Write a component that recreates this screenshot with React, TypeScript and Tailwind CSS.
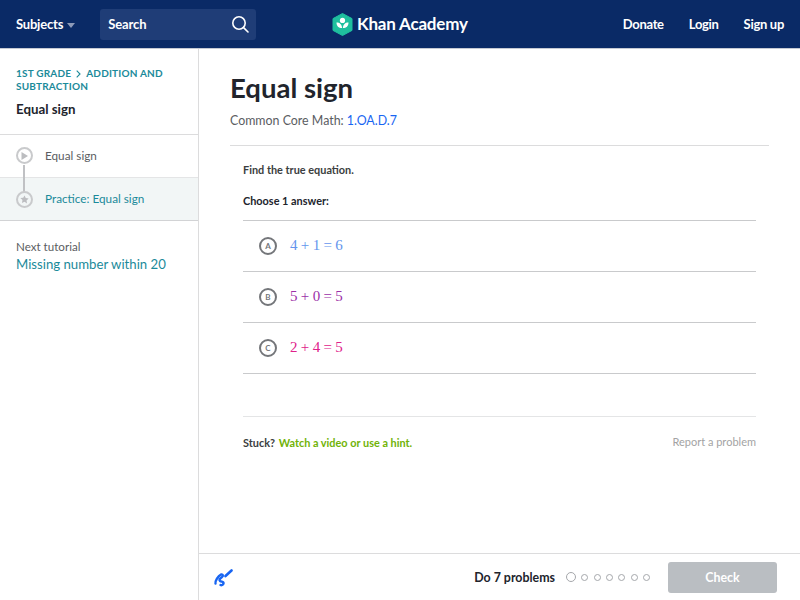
import React from "react";

const Dot = ({ big }: { big?: boolean }) => (
  <span className={big ? "w-[10px] h-[10px] rounded-full border border-[#a5a7ab]" : "w-[7px] h-[7px] rounded-full border border-[#a5a7ab]"} />
);

const Choice = ({ letter, color, children }: { letter: string; color: string; children: string }) => (
  <div className="h-[51px] border-b border-[#c9cacc] flex items-center pl-[16px]">
    <span className="w-[18px] h-[18px] rounded-full border-2 border-[#74767a] flex items-center justify-center text-[8px] font-bold text-[#74767a]">{letter}</span>
    <span className={`ml-[13px] mb-[2px] text-[15px] [word-spacing:-0.4px] ${color}`} style={{ fontFamily: '"Liberation Serif", serif' }}>{children}</span>
  </div>
);

export default function App() {
  return (
    <div className="w-[800px] h-[600px] overflow-hidden flex flex-col bg-white text-[#21242c]" style={{ fontFamily: 'Lato, sans-serif' }}>
      <header className="h-[48px] shrink-0 bg-[#0a2a66] flex items-center pl-[16px] pr-[16px] relative text-white">
        <span className="text-[13px] tracking-[-0.2px] font-bold pt-[2px]">Subjects</span>
        <svg className="ml-[4px] mt-[2px]" width="8" height="5" viewBox="0 0 8 5"><path d="M0 0h8L4 5z" fill="#8d9ab8" /></svg>
        <div className="ml-[25px] w-[156px] h-[31px] bg-[#1f3d77] rounded-[3px] flex items-center justify-between pl-[8px] pr-[7px]">
          <span className="text-[13px] tracking-[-0.1px] font-bold pt-[2px]">Search</span>
          <svg width="18" height="18" viewBox="0 0 18 18" fill="none" stroke="white" strokeWidth="1.6" strokeLinecap="round"><circle cx="8" cy="8" r="6.2" /><path d="M12.6 12.6 17 17" /></svg>
        </div>
        <div className="absolute left-[332px] top-[12px] flex items-center">
          <svg width="21" height="23" viewBox="0 0 21 23">
            <path d="M10.5 0.5 20 5.6v11.8L10.5 22.5 1 17.4V5.6z" fill="#1fbf9e" stroke="#1fbf9e" strokeLinejoin="round" />
            <circle cx="10.5" cy="7.4" r="2.6" fill="white" />
            <path d="M4.5 9.5c3.4 0 5.4 2 5.6 5.6-3.5 0-5.6-2-5.6-5.6zM16.5 9.5c-3.4 0-5.4 2-5.6 5.6 3.5 0 5.6-2 5.6-5.6z" fill="white" />
          </svg>
          <span className="ml-[4px] text-[17px] tracking-[-0.2px] font-bold leading-[24px]">Khan Academy</span>
        </div>
        <nav className="ml-auto flex items-center gap-[25px] text-[13px] tracking-[-0.3px] font-bold pt-[2px]">
          <span>Donate</span><span>Login</span><span>Sign up</span>
        </nav>
      </header>
      <div className="flex-1 flex min-h-0 border-t border-[#c5c9d3]">
        <aside className="w-[199px] shrink-0 border-r border-[#dcdcdd] flex flex-col">
          <div className="h-[86px] shrink-0 pl-[16px] pr-[20px] pt-[18px] border-b border-[#dcdcdd]">
            <div className="text-[10px] leading-[12.5px] tracking-[0.2px] font-bold text-[#1b8a9a]">
              <div>
                <span>1ST GRADE</span>
                <svg className="inline mx-[5px] mb-[1px]" width="5" height="8" viewBox="0 0 5 8" fill="none" stroke="#1b8a9a" strokeWidth="1.1"><path d="M0.7 0.7 4 4 0.7 7.3" /></svg>
                <span>ADDITION AND</span>
              </div>
              <div>SUBTRACTION</div>
            </div>
            <div className="mt-[7px] text-[13.3px] font-bold leading-[20px]">Equal sign</div>
          </div>
          <div className="relative">
            <div className="h-[43px] flex items-center pl-[45px] text-[11.75px] text-[#5b5d62] border-b border-[#e4e5e6]">Equal sign</div>
            <div className="h-[43px] flex items-center pl-[45px] text-[11.75px] text-[#1b8a9a] bg-[#f2f6f6] border-b border-[#d2d3d5]">Practice: Equal sign</div>
            <div className="absolute left-[23px] top-[30px] w-[2px] h-[30px] bg-[#c0c1c4]" />
            <span className="absolute left-[16px] top-[12px] w-[17px] h-[17px] rounded-full border-2 border-[#c9cacc] bg-white flex items-center justify-center">
              <svg width="7" height="8" viewBox="0 0 7 8"><path d="M0.5 0 7 4 0.5 8z" fill="#bcbdc0" /></svg>
            </span>
            <span className="absolute left-[16px] top-[56px] w-[17px] h-[17px] rounded-full border-2 border-[#c9cacc] bg-[#f2f6f6] flex items-center justify-center">
              <svg width="9" height="9" viewBox="0 0 24 24"><path d="M12 1l3.4 7.2 7.6 1-5.6 5.4 1.4 7.8L12 18l-6.8 3.4 1.4-7.8L1 8.2l7.6-1z" fill="#bcbdc0" /></svg>
            </span>
          </div>
          <div className="px-[16px] pt-[18px]">
            <div className="text-[11.6px] leading-[15px] text-[#5b5d62]">Next tutorial</div>
            <div className="text-[13.2px] leading-[20px] text-[#1b8a9a]">Missing number within 20</div>
          </div>
        </aside>
        <main className="flex-1 flex flex-col min-w-0">
          <div className="flex-1 pl-[31px] pr-[31px] pt-[23px]">
            <h1 className="text-[27.5px] leading-[32px] font-bold">Equal sign</h1>
            <div className="mt-[8px] text-[12.4px] leading-[18px] text-[#5b5d62]">Common Core Math: <span className="text-[#1865f2]">1.OA.D.7</span></div>
            <div className="mt-[15px] border-t border-[#dcdcdd] px-[13px] pt-[17px]">
              <div className="text-[10.9px] leading-[14px] font-bold text-[#3b3e40]">Find the true equation.</div>
              <div className="mt-[17px] text-[10.9px] leading-[14px] font-bold text-[#21242c]">Choose 1 answer:</div>
              <div className="mt-[12px] border-t border-[#c9cacc]">
                <Choice letter="A" color="text-[#6495ed]">4 + 1 = 6</Choice>
                <Choice letter="B" color="text-[#9b30a8]">5 + 0 = 5</Choice>
                <Choice letter="C" color="text-[#e0218a]">2 + 4 = 5</Choice>
              </div>
              <div className="mt-[42px] border-t border-[#e4e5e6] pt-[18px] flex items-start justify-between text-[10.9px] leading-[14px]">
                <div className="pt-[1px] font-bold text-[#3b3e40]">Stuck? <span className="ml-[1px] text-[#71b307]">Watch a video or use a hint.</span></div>
                <div className="text-[11px] text-[#a3a3a3]">Report a problem</div>
              </div>
            </div>
          </div>
          <footer className="h-[47px] shrink-0 border-t border-[#dcdcdd] flex items-center pl-[14px] pr-[23px]">
            <svg width="20" height="20" viewBox="0 0 20 20" fill="none" stroke="#1865f2" strokeLinecap="round" strokeLinejoin="round">
              <path d="M12.5 9 18.5 3.500" strokeWidth="2.6" />
              <path d="M2.5 16.5C2 14 5 9 8 7.500C10 7 10.500 9 9 10C7.500 11.500 5.500 12.500 7 14C8.500 15 11 14.500 10.500 16.500C10 18 8.500 18.500 7.500 18" strokeWidth="2.4" />
            </svg>
            <span className="ml-auto text-[12.4px] font-bold pt-[2px]">Do 7 problems</span>
            <div className="ml-[11px] flex items-center gap-[5.33px]">
              <Dot big /><Dot /><Dot /><Dot /><Dot /><Dot /><Dot />
            </div>
            <div className="ml-[18px] w-[109px] h-[31px] rounded-[3px] bg-[#babec2] flex items-center justify-center text-[12.4px] font-bold text-white pt-[2px]">Check</div>
          </footer>
        </main>
      </div>
    </div>
  );
}
